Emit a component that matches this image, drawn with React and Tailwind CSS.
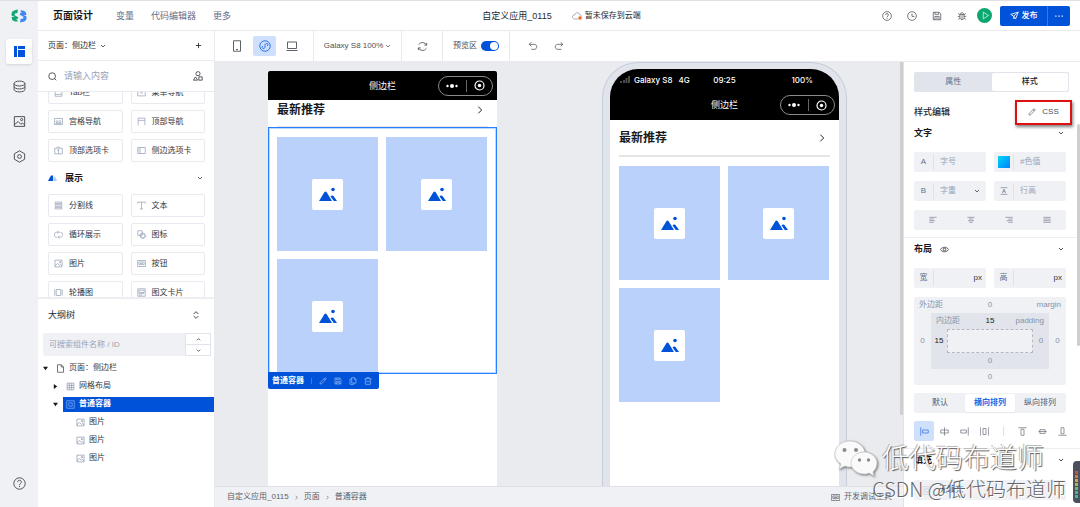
import React, { useState } from 'react';
import clsx from 'clsx';

const Icon = ({ className, sw = 1.8, children }) => (
  <svg
    viewBox="0 0 24 24"
    fill="none"
    stroke="currentColor"
    strokeWidth={sw}
    strokeLinejoin="round"
    className={clsx('shrink-0', className)}
    aria-hidden="true"
  >
    {children}
  </svg>
);

const paths = {
  chevronDown: <path d="M4 8l8 8 8-8" />,
  chevronUp: <path d="M4 16l8-8 8 8" />,
  chevronRight: <path d="M8 4l8 8-8 8" />,
  plus: <path d="M12 3v18M3 12h18" />,
  sort: <path d="M5 9l7-7 7 7M5 15l7 7 7-7" />,
  search: (
    <>
      <circle cx="11" cy="11" r="9" />
      <path d="M17 17l5 5" />
    </>
  ),
  groups: (
    <>
      <circle cx="12" cy="6.500" r="5" />
      <path d="M1 22l5-8 5 8zM14 14h8v8h-8z" />
    </>
  ),
  database: (
    <>
      <ellipse cx="12" cy="6.500" rx="10" ry="4.500" />
      <path d="M2 6.500v11c0 2.500 4.500 4.500 10 4.500s10-2 10-4.500v-11M2 12c0 2.500 4.500 4.500 10 4.500s10-2 10-4.500" />
    </>
  ),
  image: (
    <>
      <path d="M2.500 3h19v18h-19zM2.500 18l7-6 5 5 3-2 4 3" />
      <circle cx="16" cy="8.500" r="2" />
    </>
  ),
  hexagon: (
    <>
      <path d="M12 1.500l9.500 5.500v10L12 22.500 2.500 17V7z" />
      <circle cx="12" cy="12" r="3.500" />
    </>
  ),
  help: (
    <>
      <circle cx="12" cy="12" r="10.500" />
      <path d="M8.500 9.500c0-4.500 7-4.500 7 0 0 2.500-3.500 2.500-3.500 5.500M12 16.500v2" />
    </>
  ),
  clock: (
    <>
      <circle cx="12" cy="12" r="10.500" />
      <path d="M12 6v7h6" />
    </>
  ),
  save: <path d="M3 3h14l4 4v14H3zM7 3v5h9V3M7 21v-8h10v8M9.500 17h5" />,
  bug: <path d="M7 8h10v8c0 6-10 6-10 0zM8 8c0-5 8-5 8 0M12 8v12M7 13H2M22 13h-5M7 9L3 6M17 9l4-3M7 17l-4 3M17 17l4 3" />,
  play: <path d="M6 3l14 9-14 9z" />,
  send: <path d="M2 9l20-6-7 18-5-7zM10 14l12-11M10 14v7l3-3" />,
  more: <path d="M3 12h3M10.500 12h3M18 12h3" strokeWidth="3" />,
  phone: <path d="M5 1.500h14v21H5zM10 19h4" />,
  miniApp: (
    <>
      <circle cx="12" cy="12" r="10.500" />
      <path d="M8 12c-3 1-2.500 5 .5 5 2 0 3.500-1 3.500-3v-4c0-2 1.500-3 3.500-3 3 0 3.500 4 .5 5" />
    </>
  ),
  laptop: <path d="M3 4h18v13H3zM1 21h22" />,
  refresh: <path d="M21 9A10 10 0 0 0 3.500 8M3 15a10 10 0 0 0 17.500 1M21 4v5h-5M3 20v-5h5" />,
  undo: <path d="M8 3L3 8l5 5M3 8h12c8 0 8 12 0 12H8" />,
  redo: <path d="M16 3l5 5-5 5M21 8H9c-8 0-8 12 0 12h9" />,
  pencil: <path d="M3 21l1-5L17 3c2-2 6 2 4 4L8 20zM15 5l4 4" />,
  copy: <path d="M8 2h8l5 5v11H8zM8 6H3v16h12v-4M16 2v5h5" />,
  trash: <path d="M2 5h20M8 5V2h8v3M4 5v17h16V5M9 10v7M15 10v7" />,
  file: <path d="M4 2h10l6 6v14H4zM14 2v6h6" />,
  grid: <path d="M3 3h18v18H3zM3 9h18M3 15h18M9 3v18M15 3v18" />,
  container: <path d="M2 2h20v20H2zM7.500 7.500h9v9h-9z" />,
  eye: (
    <>
      <path d="M1 12c5-8 17-8 22 0-5 8-17 8-22 0z" />
      <circle cx="12" cy="12" r="3.500" />
    </>
  ),
  tabBar: <path d="M3 2h18v20H3zM3 17h18" />,
  menuNav: <path d="M2 3h20v18H2zM2 9h20M8 13h8" />,
  gridNav: <path d="M1 4h22v16H1zM5 13l3-4 3 4-3 3zM13 13l3-4 3 4-3 3zM4 17h16" />,
  topNav: <path d="M3 22V3h18v19M3 9h18" />,
  topTabs: <path d="M2 6h6V3h6v3h8v15H2zM12 6v15M8 11h4" />,
  sideTabs: <path d="M2 4h20v16H2zM8 4v16M4 9h2M4 13h2" />,
  divider: <path d="M3 3h18v4H3zM3 10h18v4H3zM3 17h18v4H3z" />,
  text: <path d="M2 7V3h20v4M12 3v18M8 21h8" />,
  loop: <path d="M9 19H7C-1 19-1 6 7 6h5M15 6h2c8 0 8 13 0 13h-5M9 2l4 4-4 4M15 15l-4 4 4 4" />,
  shapes: (
    <>
      <path d="M2 2h12v12H2zM16 9l7 7-7 7-7-7z" />
      <circle cx="15" cy="15" r="7" />
    </>
  ),
  button: <path d="M1 4h22v16H1zM5 8h14v7H5zM8 12h8" />,
  carousel: <path d="M6 4h12v16H6zM2 4v16M22 4v16" />,
  card: <path d="M2 2h20v20H2zM5 6h14v6H5zM5 15h14M5 19h9" />,
  alignLeft: <path d="M1 4h22M1 9h13M1 14h17M1 19h13" />,
  alignCenter: <path d="M1 4h22M6 9h12M3 14h18M7 19h10" />,
  alignRight: <path d="M1 4h22M10 9h13M5 14h18M10 19h13" />,
  alignJustify: <path d="M1 4h22M1 9h22M1 14h22M1 19h22" />,
  lineHeight: <path d="M2 2h20M2 22h20M7 18l5-12 5 12M9 14h6" />,
  itemsLeft: <path d="M2 1v22M7 8h15v8H7z" />,
  itemsCenter: <path d="M12 1v22M2 8h20v8H2z" />,
  itemsRight: <path d="M22 1v22M2 8h15v8H2z" />,
  itemsAround: <path d="M1 1v22M23 1v22M8 4h8v16H8z" />,
  itemsTop: <path d="M1 2h22M8 6h8v16H8z" />,
  itemsMiddle: <path d="M1 12h22M5 7h14v10H5z" />,
  itemsBottom: <path d="M1 22h22M8 2h8v16H8z" />,
};

const navComponents = [
  ['Tab栏', 'tabBar'],
  ['菜单导航', 'menuNav'],
  ['宫格导航', 'gridNav'],
  ['顶部导航', 'topNav'],
  ['顶部选项卡', 'topTabs'],
  ['侧边选项卡', 'sideTabs'],
];

const displayComponents = [
  ['分割线', 'divider'],
  ['文本', 'text'],
  ['循环展示', 'loop'],
  ['图标', 'shapes'],
  ['图片', 'image'],
  ['按钮', 'button'],
  ['轮播图', 'carousel'],
  ['图文卡片', 'card'],
];

const ComponentGrid = ({ items, className }) => (
  <div className={clsx('grid grid-cols-2 gap-x-2 gap-y-1.5', className)}>
    {items.map(([label, icon]) => (
      <button
        key={label}
        className="flex h-[23px] items-center gap-1.5 rounded-xs border border-[#e8eaef] bg-white pl-[5px] text-left"
      >
        <Icon className="size-[9px] text-[#97a3b7]" sw={2}>{paths[icon]}</Icon>
        {label}
      </button>
    ))}
  </div>
);

const Rail = () => (
  <nav className="flex w-[38px] shrink-0 flex-col items-center bg-[#f0f1f5] pt-2 text-[#4b4f57]">
    <svg viewBox="0 0 30 26" className="h-[14px] w-4 shrink-0" aria-hidden="true">
      <path d="M13 1L7 2Q1 4 1 9v3q3 2 6 1V9q0-1 2-1h3z" fill="#12a873" />
      <path d="M1 15q5 0 7-3l6 4-2 3-3-1 3 3v3l-6-1q-5-2-5-8z" fill="#12a873" />
      <path d="M17 25l6-1q6-2 6-7v-3q-3-2-6-1v4q0 1-2 1h-3z" fill="#3d86f5" />
      <path d="M29 11q-5 0-7 3l-6-4 2-3 3 1-3-3V2l6 1q5 2 5 8z" fill="#3d86f5" />
    </svg>
    <button aria-label="页面" className="mt-4 flex h-[25px] w-[26px] shrink-0 items-center justify-center rounded-xs bg-white shadow-sm">
      <svg viewBox="0 0 11 11" className="size-[11px]" fill="#0052d9" aria-hidden="true">
        <path d="M0 0h3v11H0zM4 0h7v3H4zM4 4h7v7H4z" />
      </svg>
    </button>
    <button aria-label="数据" className="mt-4">
      <Icon className="size-[13px]">{paths.database}</Icon>
    </button>
    <button aria-label="素材" className="mt-[22px]">
      <Icon className="size-[13px]">{paths.image}</Icon>
    </button>
    <button aria-label="设置" className="mt-[22px]">
      <Icon className="size-[13px]">{paths.hexagon}</Icon>
    </button>
    <button aria-label="帮助" className="mt-auto mb-[17px]">
      <Icon className="size-[13px]">{paths.help}</Icon>
    </button>
  </nav>
);

const Header = () => (
  <header className="grid h-[30px] shrink-0 grid-cols-[1fr_auto_1fr] items-center border-b border-[#e8eaef] bg-white pr-2.5 pl-[15px] text-[9px]">
    <div className="flex items-center gap-[17px] text-[#5f6f8a]">
      <h1 className="mr-1.5 text-[10px] font-bold text-[#16181d]">页面设计</h1>
      <a href="#vars">变量</a>
      <a href="#code">代码编辑器</a>
      <a href="#more">更多</a>
    </div>
    <div className="flex items-center gap-5">
      <span>自定义应用_0115</span>
      <span className="flex items-center gap-[3px] text-[8px]">
        <svg viewBox="0 0 20 16" className="h-2 w-2.5" aria-hidden="true">
          <path d="M12 14H5C-1 13 0 6 5 6c1-6 10-6 11 0 2 0 3 2 3 3" fill="none" stroke="#8792a8" strokeWidth="1.500" />
          <circle cx="16" cy="12" r="3.500" fill="#f26322" />
        </svg>
        暂未保存到云端
      </span>
    </div>
    <div className="flex items-center justify-end text-[#4b4f57]">
      <div className="flex gap-[15px]">
        <button aria-label="帮助"><Icon className="size-2.5">{paths.help}</Icon></button>
        <button aria-label="历史"><Icon className="size-2.5">{paths.clock}</Icon></button>
        <button aria-label="保存"><Icon className="size-2.5">{paths.save}</Icon></button>
        <button aria-label="调试"><Icon className="size-2.5">{paths.bug}</Icon></button>
      </div>
      <button aria-label="预览" className="ml-2.5 flex size-[15px] items-center justify-center rounded-full bg-[#0aa870] text-white">
        <Icon className="ml-px size-[9px]">{paths.play}</Icon>
      </button>
      <div className="ml-2 flex h-5 overflow-hidden rounded-xs bg-[#0052d9] text-[8px] font-medium text-white">
        <button className="flex w-12 items-center justify-center gap-[3px] border-r border-[#3a78e2]">
          <Icon className="size-[9px]" sw={2.2}>{paths.send}</Icon>
          发布
        </button>
        <button aria-label="更多操作" className="flex w-[22px] items-center justify-center">
          <Icon className="size-2.5">{paths.more}</Icon>
        </button>
      </div>
    </div>
  </header>
);

const TreeRow = ({ label, icon, arrow, indent, iconClass }) => (
  <li className={clsx('flex h-[18px] items-center', indent)}>
    <span className="w-2.5 shrink-0 text-[#16181d]">
      {arrow && (
        <svg viewBox="0 0 6 6" className="size-[5px]" fill="currentColor" aria-hidden="true">
          <path d={arrow === 'down' ? 'M0 1h6L3 5z' : 'M1 0v6l4-3z'} />
        </svg>
      )}
    </span>
    <span className="flex items-center gap-1 pl-[3px]">
      <Icon className={clsx('size-[9px]', iconClass)}>{paths[icon]}</Icon>
      {label}
    </span>
  </li>
);

const LeftPanel = () => (
  <aside className="flex w-[177px] shrink-0 flex-col border-r border-[#e8eaef] bg-white">
    <div className="flex h-[30px] shrink-0 items-center justify-between border-b border-[#e8eaef] pr-3 pl-2.5">
      <button className="flex items-center gap-1">
        页面：侧边栏
        <Icon className="size-1.5" sw={3}>{paths.chevronDown}</Icon>
      </button>
      <button aria-label="新建页面"><Icon className="size-[7px]" sw={3}>{paths.plus}</Icon></button>
    </div>
    <div className="flex h-[31px] shrink-0 items-center gap-[7px] border-b border-[#e8eaef] pr-[11px] pl-2.5">
      <Icon className="size-[9px]" sw={2}>{paths.search}</Icon>
      <input
        aria-label="搜索组件"
        placeholder="请输入内容"
        className="min-w-0 flex-1 text-[9px] outline-none placeholder:text-[#97a3b7]"
      />
      <button aria-label="分组"><Icon className="size-2.5">{paths.groups}</Icon></button>
    </div>
    <div className="h-[207px] shrink-0 overflow-hidden border-b-2 border-[#eceef2] px-2.5 pr-[9px] text-[#33363c]">
      <ComponentGrid items={navComponents} className="-mt-[11px]" />
      <button className="flex h-8 w-full items-center">
        <svg viewBox="0 0 18 12" className="h-1.5 w-[9px]" aria-hidden="true">
          <path d="M0 12L6 1h4v11z" fill="#0052d9" />
          <path d="M11 4h3l4 8h-7z" fill="#a9c8fb" />
        </svg>
        <span className="ml-2 text-[9px] font-bold text-[#16181d]">展示</span>
        <Icon className="mr-0.5 ml-auto size-1.5" sw={3}>{paths.chevronDown}</Icon>
      </button>
      <ComponentGrid items={displayComponents} />
    </div>
    <div className="flex h-[31px] shrink-0 items-center justify-between pr-3.5 pl-2.5 text-[9px]">
      大纲树
      <button aria-label="展开大纲树"><Icon className="size-2" sw={2.5}>{paths.sort}</Icon></button>
    </div>
    <div className="mt-[3px] mr-[3px] ml-[5px] flex h-[23px] shrink-0">
      <input
        aria-label="搜索大纲"
        placeholder="可搜索组件名称 / ID"
        className="min-w-0 flex-1 rounded-l-xs bg-[#f0f1f5] pl-1.5 outline-none placeholder:text-[#97a3b7]"
      />
      <div className="flex w-[26px] flex-col divide-y divide-[#e1e4ea] border border-[#e1e4ea]">
        <button aria-label="上一个" className="flex flex-1 items-center justify-center">
          <Icon className="size-[5px]" sw={3.5}>{paths.chevronUp}</Icon>
        </button>
        <button aria-label="下一个" className="flex flex-1 items-center justify-center">
          <Icon className="size-[5px]" sw={3.5}>{paths.chevronDown}</Icon>
        </button>
      </div>
    </div>
    <ul className="mt-[3px] text-[#33363c]">
      <TreeRow label="页面：侧边栏" icon="file" arrow="down" indent="pl-[5px]" />
      <TreeRow label="网格布局" icon="grid" arrow="right" indent="pl-[15px]" iconClass="text-[#8592a8]" />
      <li className="flex h-[18px] items-center pl-[15px]">
        <svg viewBox="0 0 6 6" className="mr-[5px] size-[5px] text-[#16181d]" fill="currentColor" aria-hidden="true">
          <path d="M0 1h6L3 5z" />
        </svg>
        <span className="flex h-[15px] flex-1 items-center gap-1 bg-[#0052d9] pl-[3px] font-bold text-white">
          <Icon className="size-[9px] text-[#8fb5f5]">{paths.container}</Icon>
          普通容器
        </span>
      </li>
      <TreeRow label="图片" icon="image" indent="pl-[25px]" iconClass="text-[#8592a8]" />
      <TreeRow label="图片" icon="image" indent="pl-[25px]" iconClass="text-[#8592a8]" />
      <TreeRow label="图片" icon="image" indent="pl-[25px]" iconClass="text-[#8592a8]" />
    </ul>
  </aside>
);

const Toolbar = () => {
  const [preview, setPreview] = useState(true);

  return (
    <div className="flex h-[31px] shrink-0 items-stretch divide-x divide-[#e8eaef] border-b border-[#e8eaef] bg-white text-[#4b4f57]">
      <div className="flex w-[99px] items-center justify-between pr-[15px] pl-4">
        <button aria-label="手机"><Icon className="size-3">{paths.phone}</Icon></button>
        <button aria-label="小程序" className="flex h-5 w-[23px] items-center justify-center rounded-xs bg-[#cfe0fd] text-[#1f69e8]">
          <Icon className="size-3">{paths.miniApp}</Icon>
        </button>
        <button aria-label="电脑"><Icon className="size-3">{paths.laptop}</Icon></button>
      </div>
      <button className="flex w-[88px] items-center justify-center gap-0.5">
        Galaxy S8 100%
        <Icon className="size-1.5" sw={3}>{paths.chevronDown}</Icon>
      </button>
      <button aria-label="刷新" className="flex w-[41px] items-center justify-center">
        <Icon className="size-[11px]">{paths.refresh}</Icon>
      </button>
      <label className="flex w-[67px] items-center gap-1 pl-2.5">
        预览区
        <input
          type="checkbox"
          role="switch"
          checked={preview}
          onChange={(e) => setPreview(e.target.checked)}
          className="h-2.5 w-[18px] appearance-none rounded-full bg-gray-300 p-px before:block before:size-2 before:rounded-full before:bg-white checked:bg-[#0052d9] checked:before:ml-auto"
        />
      </label>
      <div className="flex items-center gap-4 pl-[18px]">
        <button aria-label="撤销"><Icon className="size-2.5">{paths.undo}</Icon></button>
        <button aria-label="重做"><Icon className="size-2.5">{paths.redo}</Icon></button>
      </div>
    </div>
  );
};

const NavBar = ({ className }) => (
  <div className={clsx('grid grid-cols-[1fr_auto_1fr] items-center bg-black pr-1 text-white', className)}>
    <span />
    <span className="pl-1 text-[9px]">侧边栏</span>
    <div className="flex h-5 w-[55px] items-center justify-between justify-self-end rounded-full border border-[#8a8a8a] pr-[7px] pl-[7px]">
      <svg viewBox="0 0 12 6" className="h-1.5 w-3" fill="currentColor" aria-hidden="true">
        <circle cx="1.500" cy="3" r="1.200" />
        <circle cx="6" cy="3" r="2" />
        <circle cx="10.500" cy="3" r="1.200" />
      </svg>
      <span className="h-3 w-px bg-[#666]" />
      <svg viewBox="0 0 22 22" className="size-[11px]" aria-hidden="true">
        <circle cx="11" cy="11" r="9" fill="none" stroke="currentColor" strokeWidth="2.400" />
        <circle cx="11" cy="11" r="3.500" fill="currentColor" />
      </svg>
    </div>
  </div>
);

const SectionTitle = ({ className }) => (
  <div className={clsx('flex items-center justify-between pr-[3px] text-[#16181d]', className)}>
    <h2 className="text-[12px] leading-4 font-bold">最新推荐</h2>
    <Icon className="size-2.5" sw={2.2}>{paths.chevronRight}</Icon>
  </div>
);

const ImageGrid = () => (
  <div className="grid grid-cols-2 gap-2">
    {[1, 2, 3].map((n) => (
      <div key={n} className="flex h-[114px] items-center justify-center bg-[#bad2fb]">
        <div className="flex size-[31px] items-center justify-center rounded-xs bg-white">
          <svg viewBox="0 0 18 15" className="mt-px h-[15px] w-[18px]" fill="#0052d9" aria-hidden="true">
            <path d="M0 14L5.500 5q1-1.200 2 0L13 14z" />
            <path d="M11.500 9.500l1.200-.9q1-.5 1.800.5L18 14h-3.200z" />
            <circle cx="14" cy="2.500" r="1.800" />
          </svg>
        </div>
      </div>
    ))}
  </div>
);

const EditorPhone = () => (
  <div className="mt-[9px] flex w-[229px] shrink-0 flex-col bg-white">
    <NavBar className="h-[29px] rounded-t-xs" />
    <SectionTitle className="mx-[9px] h-[27px] border-b border-[#e5e5e5] pb-1.5" />
    <div className="relative border border-[#2680ff] pt-[9px] pr-[9px] pl-2 inset-ring inset-ring-[#2680ff]/30">
      <ImageGrid />
      <div className="absolute -bottom-4 -left-px flex h-[17px] w-[111px] items-center gap-[7px] rounded-b-xs bg-[#0052d9] pl-1 text-[#a9c8fb]">
        <span className="font-bold text-white">普通容器</span>
        <span className="h-1.5 w-px bg-[#3a78e2]" />
        <button aria-label="编辑"><Icon className="size-2">{paths.pencil}</Icon></button>
        <button aria-label="保存"><Icon className="size-2">{paths.save}</Icon></button>
        <button aria-label="复制"><Icon className="size-2">{paths.copy}</Icon></button>
        <button aria-label="删除"><Icon className="size-2">{paths.trash}</Icon></button>
      </div>
    </div>
  </div>
);

const PreviewPhone = () => (
  <div className="flex w-[245px] shrink-0 flex-col rounded-t-[36px] border border-b-0 border-[#c6cddb] bg-[#e1e5eb] px-[7px] pt-1.5">
    <div className="flex flex-1 flex-col overflow-hidden rounded-t-[28px] bg-white">
      <div className="grid h-[21px] grid-cols-[1fr_auto_1fr] items-center bg-black pr-[26px] pl-2.5 font-[Inter,sans-serif] font-medium text-white">
        <span className="flex items-center gap-1">
          <svg viewBox="0 0 10 7" className="h-[7px] w-2.5" fill="#4a4a4a" aria-hidden="true">
            <path d="M0 5h2v2H0zM3 4h2v3H3zM5.500 2h2v5h-2zM8 0h2v7H8z" />
          </svg>
          Galaxy S8
          <span className="pl-0.5">4G</span>
        </span>
        <span className="pl-4">09:25</span>
        <span className="text-right">100%</span>
      </div>
      <NavBar className="h-[30px]" />
      <SectionTitle className="mx-[9px] h-[37px] border-b-2 border-[#e5e5e5]" />
      <div className="pt-[9px] pr-2.5 pl-[9px]">
        <ImageGrid />
      </div>
    </div>
  </div>
);

const Canvas = () => (
  <div className="flex min-h-0 flex-1 bg-[#eaebef]">
    <div className="flex min-w-0 flex-1 justify-between gap-4 overflow-hidden pr-[53px] pl-[53px]">
      <EditorPhone />
      <PreviewPhone />
    </div>
    <div className="w-[3px] shrink-0">
      <div className="h-5/6 rounded-b-xs bg-[#cfcfcf]" />
    </div>
  </div>
);

const Footer = () => (
  <footer className="flex h-[21px] shrink-0 items-center border-t border-[#dfe1e6] bg-[#f0f1f5] pr-[11px] pl-3 text-[#5a5e66]">
    <ol className="flex items-center gap-[5px]">
      <li>自定义应用_0115</li>
      <li aria-hidden="true"><Icon className="size-[5px]" sw={3}>{paths.chevronRight}</Icon></li>
      <li>页面</li>
      <li aria-hidden="true"><Icon className="size-[5px]" sw={3}>{paths.chevronRight}</Icon></li>
      <li>普通容器</li>
    </ol>
    <button className="ml-auto flex items-center gap-1">
      <Icon className="size-[9px]">{paths.button}</Icon>
      开发调试工具
    </button>
  </footer>
);

const Field = ({ mark, label, placeholder, unit, children }) => (
  <label className="flex h-5 min-w-0 items-center rounded-xs bg-[#f0f1f5] text-[#5f6f8a]">
    <span className="flex h-4 w-5 shrink-0 items-center justify-center border-r border-[#dfe2e8]">{mark}</span>
    <input
      aria-label={label}
      placeholder={placeholder}
      className="w-0 min-w-0 flex-1 pl-1.5 outline-none placeholder:text-[#97a3b7]"
    />
    {unit && <span className="pr-1 text-[#33363c]">{unit}</span>}
    {children}
  </label>
);

const PanelTitle = ({ children, className }) => (
  <div className={clsx('flex items-center gap-2 text-[9px] font-bold text-[#16181d]', className)}>
    {children}
    <Icon className="mr-0.5 ml-auto size-1.5" sw={3}>{paths.chevronDown}</Icon>
  </div>
);

const BoxModel = () => (
  <div className="mt-[9px] grid h-[88px] shrink-0 grid-cols-[17px_1fr_17px] grid-rows-[16px_1fr_16px] items-center rounded-xs bg-[#f0f1f5] text-center text-[#8592a8]">
    <div className="col-span-3 grid grid-cols-3 px-[5px]">
      <span className="text-left">外边距</span>
      <span>0</span>
      <span className="text-right">margin</span>
    </div>
    <span>0</span>
    <div className="grid h-full grid-cols-[16px_1fr_16px] grid-rows-[16px_1fr_16px] items-center bg-[#e1e5eb]">
      <div className="col-span-3 grid grid-cols-3 px-[5px]">
        <span className="text-left">内边距</span>
        <span className="text-[#16181d]">15</span>
        <span className="text-right">padding</span>
      </div>
      <span className="text-[#16181d]">15</span>
      <div className="h-full border border-dashed border-[#b3b8c2] bg-[#f0f1f5]" />
      <span>0</span>
      <span className="col-span-3">0</span>
    </div>
    <span>0</span>
    <span className="col-span-3">0</span>
  </div>
);

const layouts = ['默认', '横向排列', '纵向排列'];
const horizontalAligns = ['itemsLeft', 'itemsCenter', 'itemsRight', 'itemsAround'];
const verticalAligns = ['itemsTop', 'itemsMiddle', 'itemsBottom'];

const StylePanel = () => {
  const [layout, setLayout] = useState('横向排列');

  return (
    <aside className="relative flex w-[177px] shrink-0 flex-col overflow-hidden border-l border-[#dfe1e6] bg-white pr-3.5 pl-2.5">
      <div className="mt-2.5 -mr-[3px] grid h-5 shrink-0 grid-cols-2 rounded-xs bg-[#e1e5eb] p-px">
        <button className="text-[#5f6f8a]">属性</button>
        <button className="rounded-xs bg-white font-medium text-[#16181d]">样式</button>
      </div>
      <div className="mt-[9px] flex h-[22px] shrink-0 items-center justify-between text-[9px] font-medium">
        样式编辑
        <button className="-mr-1.5 flex h-[25px] w-[57px] items-center justify-center gap-1.5 border-2 border-[#e01010] text-[8px] font-normal text-[#4b4f57] shadow-[1px_2px_3px_rgba(0,0,0,0.5)]">
          <Icon className="size-2">{paths.pencil}</Icon>
          CSS
        </button>
      </div>
      <PanelTitle className="h-5 shrink-0">文字</PanelTitle>
      <div className="mt-[9px] grid shrink-0 grid-cols-2 gap-x-2 gap-y-[9px]">
        <Field mark="A" label="字号" placeholder="字号" />
        <Field
          mark={<span className="size-3 bg-linear-to-br from-[#10d8f5] to-[#1380fb]" />}
          label="色值"
          placeholder="#色值"
        />
        <Field mark="B" label="字重" placeholder="字重">
          <Icon className="mr-1.5 size-1.5 text-[#33363c]" sw={3}>{paths.chevronDown}</Icon>
        </Field>
        <Field mark={<Icon className="size-2">{paths.lineHeight}</Icon>} label="行高" placeholder="行高" />
      </div>
      <div className="mt-[9px] flex h-5 shrink-0 items-center justify-around rounded-xs bg-[#f0f1f5] text-[#6b7484]">
        {['alignLeft', 'alignCenter', 'alignRight', 'alignJustify'].map((name) => (
          <button key={name} aria-label={name}><Icon className="size-2">{paths[name]}</Icon></button>
        ))}
      </div>
      <hr className="-mr-3.5 -ml-2.5 mt-[7px] border-[#eceef2]" />
      <PanelTitle className="h-[22px] shrink-0">
        布局
        <Icon className="size-[9px]">{paths.eye}</Icon>
      </PanelTitle>
      <div className="mt-2 grid shrink-0 grid-cols-2 gap-x-2">
        <Field mark="宽" label="宽" unit="px" />
        <Field mark="高" label="高" unit="px" />
      </div>
      <BoxModel />
      <div className="mt-2 grid h-5 shrink-0 grid-cols-3 rounded-xs bg-[#f0f1f5] p-px text-[#4b5a72]">
        {layouts.map((name) => (
          <button
            key={name}
            onClick={() => setLayout(name)}
            className={clsx(layout === name && 'rounded-xs bg-white font-bold text-[#1f69e8] shadow-xs')}
          >
            {name}
          </button>
        ))}
      </div>
      <div className="mt-2 -mr-1.5 flex h-5 shrink-0 items-center text-[#5f6672]">
        {horizontalAligns.map((name, index) => (
          <button
            key={name}
            aria-label={name}
            className={clsx('flex size-5 items-center justify-center', index === 0 && 'rounded-xs bg-[#cfe0fd] text-[#1f69e8]')}
          >
            <Icon className="size-[9px]">{paths[name]}</Icon>
          </button>
        ))}
        <span className="mx-auto h-2.5 w-px bg-[#dfe2e8]" />
        {verticalAligns.map((name) => (
          <button key={name} aria-label={name} className="flex size-5 items-center justify-center">
            <Icon className="size-[9px]">{paths[name]}</Icon>
          </button>
        ))}
      </div>
      <hr className="-mr-3.5 -ml-2.5 mt-[7px] border-[#eceef2]" />
      <PanelTitle className="h-[22px] shrink-0">填充</PanelTitle>
      <button className="mt-[9px] flex h-5 shrink-0 items-center gap-2 rounded-xs bg-[#f0f1f5] pl-2 text-[#33363c]">
        <Icon className="size-[9px] text-[#c6cddb]">{paths.container}</Icon>
        无填充
      </button>
      <div className="absolute top-[62px] right-0 h-[222px] w-[3px] rounded-full bg-[#cfcfcf]" />
    </aside>
  );
};

const Watermark = () => (
  <div className="pointer-events-none absolute right-3.5 bottom-2 flex flex-col items-end">
    <div className="mr-[22px] flex items-center gap-1">
      <svg viewBox="0 0 44 40" className="h-10 w-11 drop-shadow-[1px_1px_1px_rgba(0,0,0,0.5)]" fill="#fafafa" stroke="#bdbdbd" strokeWidth="0.600" aria-hidden="true">
        <path d="M16 2C7 2 1 8 1 15c0 4 2 7 6 10l-2 5 6-3c2 1 4 1 6 1h2c-3-9 4-15 12-15C29 6 23 2 16 2z" />
        <path d="M30 13c-7 0-13 5-13 11s6 11 13 11c2 0 3 0 5-1l5 3-1-4c2-2 4-5 4-9 0-6-6-11-13-11z" />
        <g fill="#8a8a8a" stroke="none">
          <circle cx="10.500" cy="11" r="2" />
          <circle cx="22" cy="11" r="2" />
          <circle cx="25.500" cy="21" r="1.700" />
          <circle cx="34.500" cy="21" r="1.700" />
        </g>
      </svg>
      <span className="text-[27px] leading-8 font-light text-white [text-shadow:1px_1px_1px_#555,-1px_-1px_0_#bbb]">低代码布道师</span>
    </div>
    <span className="font-['Noto_Sans_CJK_SC',sans-serif] text-[20px] leading-5 font-light text-[#666] [text-shadow:1px_1px_0_#fff]">
      CSDN @低代码布道师
    </span>
  </div>
);

const levelColors = ['bg-[#c8504a]', 'bg-[#cf7a45]', 'bg-[#d3a648]', 'bg-[#a8b650]', 'bg-[#6fb868]', 'bg-[#45b58e]', 'bg-[#38b9a2]'];

const LevelMeter = () => (
  <div className="absolute right-0 bottom-1 flex h-[42px] w-[7px] flex-col items-center justify-center gap-px rounded-l-sm bg-[#4c505e] pt-1">
    {levelColors.map((color) => (
      <span key={color} className={clsx('h-[3px] w-[3px]', color)} />
    ))}
  </div>
);

export default function App() {
  return (
    <div className="relative flex h-screen overflow-hidden border-t border-[#e0e1e5] bg-white font-['Liberation_Sans','Noto_Sans_CJK_SC',sans-serif] text-[8px] leading-3 text-[#26292f]">
      <Rail />
      <div className="flex min-w-0 flex-1 flex-col">
        <Header />
        <div className="flex min-h-0 flex-1">
          <LeftPanel />
          <div className="flex min-w-0 flex-1 flex-col">
            <Toolbar />
            <div className="flex min-h-0 flex-1">
              <main className="flex min-w-0 flex-1 flex-col">
                <Canvas />
                <Footer />
              </main>
              <StylePanel />
            </div>
          </div>
        </div>
      </div>
      <Watermark />
      <LevelMeter />
    </div>
  );
}
